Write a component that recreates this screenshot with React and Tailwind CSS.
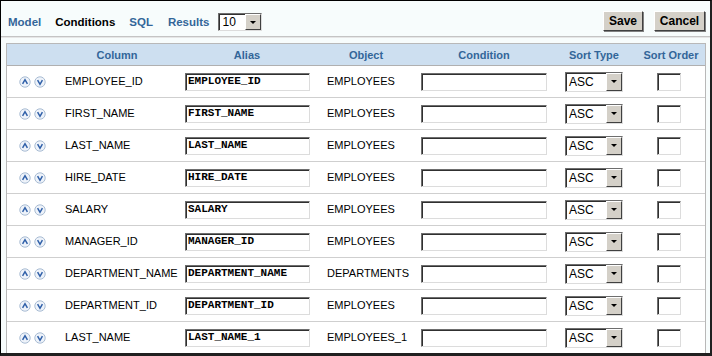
import React from 'react';

const rows = [
  ['EMPLOYEE_ID', 'EMPLOYEE_ID', 'EMPLOYEES'],
  ['FIRST_NAME', 'FIRST_NAME', 'EMPLOYEES'],
  ['LAST_NAME', 'LAST_NAME', 'EMPLOYEES'],
  ['HIRE_DATE', 'HIRE_DATE', 'EMPLOYEES'],
  ['SALARY', 'SALARY', 'EMPLOYEES'],
  ['MANAGER_ID', 'MANAGER_ID', 'EMPLOYEES'],
  ['DEPARTMENT_NAME', 'DEPARTMENT_NAME', 'DEPARTMENTS'],
  ['DEPARTMENT_ID', 'DEPARTMENT_ID', 'EMPLOYEES'],
  ['LAST_NAME', 'LAST_NAME_1', 'EMPLOYEES_1'],
];

const cols = 'grid grid-cols-[48px_124px_136px_102px_134px_86px_68px]';

const Arrow = ({ down }) => (
  <svg width="12" height="12" viewBox="0 0 12 12">
    <circle cx="6" cy="6" r="5.2" fill="#eef3fa" stroke="#a9bcd3" strokeWidth="1" />
    <path
      d={down ? 'M3.6 4.2 L6 8.3 L8.4 4.2' : 'M3.6 7.8 L6 3.7 L8.4 7.8'}
      fill="none"
      stroke="#2f5fa8"
      strokeWidth="1.5"
    />
  </svg>
);

const Sunken = ({ className = '', children }) => (
  <div
    className={`border border-t-[#6e6e6e] border-l-[#6e6e6e] border-b-[#dcdcdc] border-r-[#dcdcdc] bg-white shadow-[inset_1px_1px_0_#303030] ${className}`}
  >
    {children}
  </div>
);

const DropArrow = () => (
  <div className="w-[16px] h-full bg-[#d4d0c8] border border-t-white border-l-white border-b-[#404040] border-r-[#404040] flex items-center justify-center">
    <div className="w-0 h-0 border-l-[3px] border-r-[3px] border-t-[3px] border-l-transparent border-r-transparent border-t-black" />
  </div>
);

const Select = ({ value, className }) => (
  <Sunken className={`flex items-stretch ${className}`}>
    <span className="flex-1 pl-[3px] text-[12px] leading-none flex items-center text-black">{value}</span>
    <DropArrow />
  </Sunken>
);

const Button = ({ children, className }) => (
  <button
    className={`h-[20px] bg-[#d4d0c8] border border-t-white border-l-white border-b-[#404040] border-r-[#404040] shadow-[1px_1px_0_#808080] text-[12px] font-bold text-black leading-none ${className}`}
  >
    {children}
  </button>
);

export default function App() {
  return (
    <div
      className="w-[712px] h-[356px] bg-[#f7fcfc] border-l border-t border-black border-r-2 border-b-[3px] border-r-[#202020] border-b-[#202020] overflow-hidden"
      style={{ fontFamily: '"Liberation Sans", Arial, sans-serif' }}
    >
      {/* top bar */}
      <div className="flex items-center h-[20px] mt-[10px] pl-[7px] pr-[5px]">
        <span className="text-[11.5px] font-bold text-[#336699] mt-[3px]">Model</span>
        <span className="ml-[14px] text-[11.5px] font-bold text-black mt-[3px]">Conditions</span>
        <span className="ml-[14px] text-[11.5px] font-bold text-[#336699] mt-[3px]">SQL</span>
        <span className="ml-[15px] text-[11.5px] font-bold text-[#336699] mt-[3px]">Results</span>
        <Select value="10" className="ml-[9px] w-[44px] h-[18px] mt-[2px]" />
        <div className="flex-1" />
        <Button className="w-[40px]">Save</Button>
        <Button className="ml-[11px] w-[51px]">Cancel</Button>
      </div>
      <div className="mt-[5px] h-[1px] bg-[#c4c4c4]" />
      <div className="h-[1px] bg-[#e6e6e6]" />

      {/* panel */}
      <div className="mt-[5px] ml-[5px] w-[700px] border border-[#b8b8b8] bg-white">
        <div className={`${cols} h-[22px] pt-[1px] bg-[#cddff0] border-b border-[#b0b0b0] items-center text-[11px] font-bold text-[#336699] text-center`}>
          <span />
          <span>Column</span>
          <span>Alias</span>
          <span>Object</span>
          <span>Condition</span>
          <span>Sort Type</span>
          <span>Sort Order</span>
        </div>
        {rows.map(([col, alias, obj], i) => (
          <div
            key={i}
            className={`${cols} h-[32px] items-center border-b border-[#cfcfcf] text-[11px] text-black`}
          >
            <div className="flex items-center gap-[3px] pl-[12px]">
              <Arrow />
              <Arrow down />
            </div>
            <span className="pl-[10px] whitespace-nowrap">{col}</span>
            <div className="pl-[6px]">
              <Sunken className="w-[125px] h-[18px] flex items-center pl-[2px]">
                <span
                  className="text-[11px] font-bold leading-none text-black"
                  style={{ fontFamily: '"Liberation Mono", "Courier New", monospace' }}
                >
                  {alias}
                </span>
              </Sunken>
            </div>
            <span className="pl-[12px] whitespace-nowrap">{obj}</span>
            <div className="pl-[4px]">
              <Sunken className="w-[126px] h-[18px]" />
            </div>
            <div className="pl-[14px]">
              <Select value="ASC" className="w-[58px] h-[20px]" />
            </div>
            <div className="pl-[20px]">
              <Sunken className="w-[24px] h-[18px]" />
            </div>
          </div>
        ))}
      </div>
    </div>
  );
}
